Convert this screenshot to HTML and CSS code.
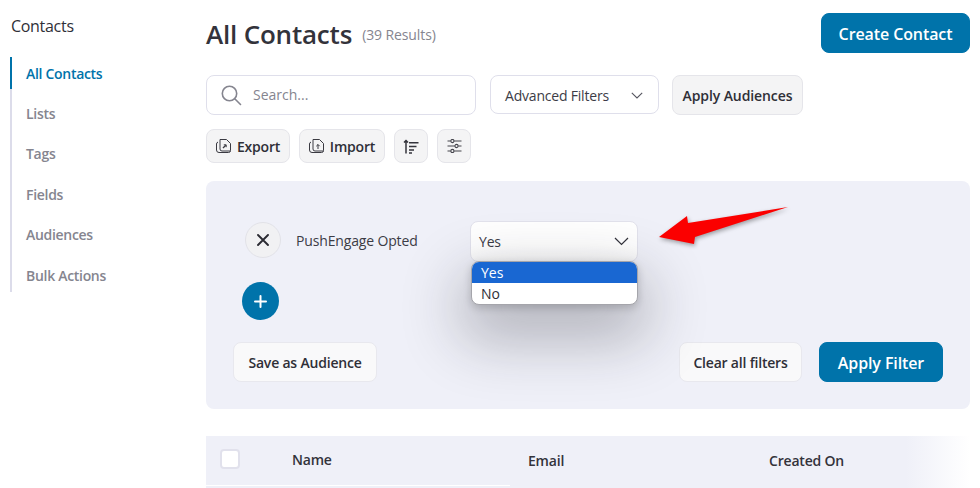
FILE: index.html
```html
<!DOCTYPE html>
<html lang="en">
<head>
    <meta charset="UTF-8">
    <title>Contacts</title>
    <link rel="stylesheet" href="styles.css">
</head>
<body>
<div class="page">
    <aside class="sidebar">
        <div class="sidebarTitle">Contacts</div>
        <nav class="sideNav">
            <a class="sideLink active">All Contacts</a>
            <a class="sideLink">Lists</a>
            <a class="sideLink">Tags</a>
            <a class="sideLink">Fields</a>
            <a class="sideLink">Audiences</a>
            <a class="sideLink">Bulk Actions</a>
        </nav>
    </aside>

    <main class="main">
        <header class="topRow">
            <div class="titleWrap">
                <h1 class="pageTitle">All Contacts</h1>
                <span class="resultCount">(39 Results)</span>
            </div>
            <button class="btn primary createBtn">Create Contact</button>
        </header>

        <div class="filterRow">
            <div class="searchBox">
                <svg class="searchIcon" width="22" height="22" viewBox="0 0 22 22" fill="none" stroke="#85858f" stroke-width="1.6" stroke-linecap="round">
                    <circle cx="9.5" cy="9.5" r="7.2"/>
                    <path d="M15 15l5.5 5.5"/>
                </svg>
                <span>Search...</span>
            </div>
            <div class="advFilters">
                <span>Advanced Filters</span>
                <svg width="12" height="7" viewBox="0 0 12 7" fill="none" stroke="#55555f" stroke-width="1.1"><path d="M.8.8L6 6l5.2-5.200"/></svg>
            </div>
            <button class="btn grey applyAud">Apply Audiences</button>
        </div>

        <div class="toolRow">
            <button class="btn grey toolBtn exportBtn">
                <svg width="15" height="15" viewBox="0 0 15 15" fill="none" stroke="#3a3a42" stroke-width="1">
                    <path d="M4 .5h6.500l4 4v7a2 2 0 0 1-2 2h-9.500a2.500 2.500 0 0 1-2.500-2.500v-6a2 2 0 0 1 1.500-1.900"/>
                    <path d="M4 .5v9.500a2 2 0 0 0 2 2h8.500"/>
                    <path d="M7 9l2.800-2.800" stroke-width="1.300"/>
                    <path d="M7.800 5.800h2.400v2.400"/>
                </svg>
                Export
            </button>
            <button class="btn grey toolBtn importBtn">
                <svg width="15" height="15" viewBox="0 0 15 15" fill="none" stroke="#3a3a42" stroke-width="1">
                    <path d="M4 .5h6.500l4 4v7a2 2 0 0 1-2 2h-9.500a2.500 2.500 0 0 1-2.500-2.500v-6a2 2 0 0 1 1.500-1.900"/>
                    <path d="M4 .5v9.500a2 2 0 0 0 2 2h8.500"/>
                    <path d="M9 10V5.500M7.300 7.200L9 5.500l1.700 1.700"/>
                </svg>
                Import
            </button>
            <button class="btn grey iconBtn">
                <svg width="16" height="15" viewBox="0 0 16 15" fill="none" stroke="#33333b" stroke-width="1.500">
                    <path d="M3 14.500V1.500M1 3.500l2-2 2 2M6 3.800h9.500M6 7.500h7.500M6 11h5M6 14h3"/>
                </svg>
            </button>
            <button class="btn grey iconBtn">
                <svg width="15" height="14" viewBox="0 0 15 14" fill="none" stroke="#44444c" stroke-width="1.100">
                    <path d="M.5 2h3.200M7.200 2h7.300M.5 7h7.200M11.200 7h3.300M.5 12h3.200M7.200 12h7.300"/>
                    <circle cx="5.400" cy="2" r="1.600"/>
                    <circle cx="9.500" cy="7" r="1.600"/>
                    <circle cx="5.400" cy="12" r="1.600"/>
                </svg>
            </button>
        </div>

        <section class="filterPanel">
            <div class="ruleRow">
                <button class="removeBtn">
                    <svg width="12" height="12" viewBox="0 0 12 12" stroke="#2b2b33" stroke-width="1.900" stroke-linecap="round"><path d="M1 1l10 10M11 1L1 11"/></svg>
                </button>
                <span class="ruleLabel">PushEngage Opted</span>
                <div class="selectWrap">
                    <div class="selectBox">
                        <span>Yes</span>
                        <svg width="15" height="9" viewBox="0 0 15 9" fill="none" stroke="#33333b" stroke-width="1.200"><path d="M1 1l6.500 6.500L14 1"/></svg>
                    </div>
                    <ul class="selectMenu">
                        <li class="selected">Yes</li>
                        <li>No</li>
                    </ul>
                </div>
            </div>
            <button class="addBtn">
                <svg width="13" height="13" viewBox="0 0 13 13" stroke="#fff" stroke-width="2" stroke-linecap="round"><path d="M6.500 1v11M1 6.500h11"/></svg>
            </button>
            <div class="panelActions">
                <button class="btn light">Save as Audience</button>
                <div class="panelRight">
                    <button class="btn light">Clear all filters</button>
                    <button class="btn primary applyFilter">Apply Filter</button>
                </div>
            </div>
            <svg class="arrow" width="136" height="44" viewBox="0 0 136 44">
                <polygon points="1,31 29,10 30,17 130,1 37,31 36,38" fill="#fb0000"/>
            </svg>
        </section>

        <div class="tableHead">
            <span class="checkBox"></span>
            <span class="colName">Name</span>
            <span class="colEmail">Email</span>
            <span class="colCreated">Created On</span>
            <span class="headLine"></span>
        </div>
    </main>
</div>
</body>
</html>
```

FILE: styles.css
```css
html, body {
    margin: 0;
    padding: 0;
    height: 488px;
    overflow: hidden;
    background-color: #fff;
    color: #2f2f37;
    font-family: "Open Sans", "Noto Sans", sans-serif;
}

.page {
    display: flex;
    height: 488px;
}

.sidebar {
    width: 206px;
    flex: none;
    padding: 16px 0 0 10px;
    box-sizing: border-box;
}

.sidebarTitle {
    font-size: 16px;
    line-height: 20px;
    font-weight: 500;
    padding-left: 1px;
    letter-spacing: -0.3px;
    color: #2f2f37;
}

.sideNav {
    margin-top: 21px;
    display: flex;
    flex-direction: column;
    width: 180px;
    border-left: 2px solid #dcdcea;
}

.sideLink {
    height: 40.600px;
    line-height: 32px;
    padding-left: 14px;
    margin-left: -2px;
    border-left: 2px solid transparent;
    font-size: 14px;
    font-weight: 600;
    letter-spacing: -0.3px;
    color: #85858f;
}

.sideLink:last-child {
    height: 32px;
    line-height: 32px;
}

.sideLink.active {
    height: 32px;
    line-height: 33px;
    margin-bottom: 8.500px;
    color: #0073aa;
    border-left-color: #0073aa;
}

.main {
    width: 764px;
    flex: none;
    position: relative;
}

.btn {
    font-family: inherit;
    font-size: 14px;
    font-weight: 600;
    letter-spacing: -0.2px;
    border-radius: 8px;
    padding: 0;
    cursor: pointer;
    color: #2f2f37;
}

.btn.primary {
    background-color: #0073aa;
    border: 1px solid #0073aa;
    color: #fff;
    font-size: 16px;
    letter-spacing: -0.1px;
    padding-top: 1px;
}

.btn.grey {
    background-color: #f4f4f5;
    border: 1px solid #e5e5ea;
}

.btn.light {
    background-color: #f9f9fa;
    border: 1px solid #e8e8ee;
    height: 40px;
}

.topRow {
    display: flex;
    justify-content: space-between;
    padding-top: 13px;
    height: 62px;
    box-sizing: border-box;
}

.titleWrap {
    display: flex;
    align-items: baseline;
    gap: 10px;
    line-height: 42px;
}

.pageTitle {
    margin: 0;
    font-size: 26px;
    font-weight: 600;
    letter-spacing: -0.2px;
    color: #33333b;
}

.resultCount {
    font-size: 14px;
    letter-spacing: -0.1px;
    color: #85858f;
    position: relative;
    top: -4px;
}

.createBtn {
    width: 149px;
    height: 40px;
}

.filterRow {
    display: flex;
    margin-top: 13px;
    align-items: flex-start;
}

.searchBox {
    width: 270px;
    height: 40px;
    box-sizing: border-box;
    border: 1px solid #dfdfeb;
    border-radius: 8px;
    display: flex;
    align-items: center;
    gap: 11px;
    padding-left: 13px;
    font-size: 14px;
    color: #85858f;
    margin-right: 14px;
}

.searchBox span {
    position: relative;
    top: -1px;
}

.advFilters {
    width: 169px;
    height: 39px;
    box-sizing: border-box;
    border: 1px solid #dfdfeb;
    border-radius: 8px;
    display: flex;
    align-items: center;
    justify-content: space-between;
    padding: 2px 15px 0 14px;
    font-size: 14px;
    letter-spacing: -0.2px;
    color: #3c3c46;
    margin-right: 13px;
}

.applyAud {
    width: 131px;
    height: 40px;
    letter-spacing: -0.1px;
}

.toolRow {
    display: flex;
    gap: 9px;
    margin-top: 14px;
}

.toolBtn {
    height: 34px;
    display: flex;
    align-items: center;
    justify-content: center;
    gap: 6px;
}

.exportBtn {
    width: 84px;
}

.importBtn {
    width: 86px;
}

.iconBtn {
    width: 34px;
    height: 34px;
    display: flex;
    align-items: center;
    justify-content: center;
}

.filterPanel {
    position: relative;
    margin-top: 18px;
    height: 228px;
    box-sizing: border-box;
    background-color: #eff0f8;
    border-radius: 8px;
    padding: 41px 27px 0 27px;
}

.ruleRow {
    display: flex;
    align-items: flex-start;
    padding-left: 12px;
}

.removeBtn {
    width: 36px;
    height: 36px;
    padding: 0;
    border-radius: 50%;
    border: 1px solid #e2e2e8;
    background-color: #f1f1f3;
    display: flex;
    align-items: center;
    justify-content: center;
    flex: none;
}

.ruleLabel {
    width: 174px;
    margin-left: 15px;
    line-height: 38px;
    font-size: 14px;
    letter-spacing: -0.15px;
    color: #3c3c46;
}

.selectWrap {
    position: relative;
    width: 168px;
    margin-top: -1px;
}

.selectBox {
    height: 41px;
    box-sizing: border-box;
    background: linear-gradient(#fff 60%, #f8f8f9);
    border: 1px solid #e2e2ec;
    border-radius: 8px;
    display: flex;
    align-items: center;
    justify-content: space-between;
    padding: 0 8px 0 8px;
    font-size: 14px;
    letter-spacing: -0.2px;
    color: #3c3c46;
}

.selectMenu {
    position: absolute;
    top: 40px;
    left: 1px;
    width: 167px;
    box-sizing: border-box;
    margin: 0;
    padding: 0;
    list-style: none;
    background-color: #fff;
    border: 1px solid #a5a5ab;
    border-radius: 8px;
    overflow: hidden;
    font-size: 14px;
    line-height: 21px;
    color: #2f2f37;
    box-shadow: 0 24px 60px 10px rgba(30, 30, 40, 0.3), 0 3px 8px rgba(0, 0, 0, 0.18);
}

.selectMenu li {
    padding-left: 9px;
}

.selectMenu .selected {
    background-color: #1967d2;
    color: #fff;
}

.addBtn {
    position: relative;
    display: flex;
    align-items: center;
    justify-content: center;
    width: 37px;
    height: 38px;
    margin: 20px 0 0 9px;
    padding: 0;
    border: none;
    border-radius: 50%;
    background-color: #0073aa;
}

.panelActions {
    display: flex;
    justify-content: space-between;
    margin-top: 22px;
}

.panelActions > .btn {
    width: 144px;
}

.panelRight {
    display: flex;
    gap: 17px;
}

.panelRight .light {
    width: 123px;
}

.applyFilter {
    width: 124px;
    height: 40px;
}

.arrow {
    position: absolute;
    left: 452px;
    top: 25px;
    filter: drop-shadow(1px 2px 2px rgba(0, 0, 0, 0.35));
}

.tableHead {
    position: relative;
    margin-top: 27px;
    height: 52px;
    background: linear-gradient(to right, #eff0f8 700px, #fff 764px);
    font-size: 14px;
    font-weight: 600;
    letter-spacing: -0.2px;
    color: #33333b;
}

.tableHead span {
    position: absolute;
}

.checkBox {
    left: 14px;
    top: 13px;
    width: 20px;
    height: 20px;
    box-sizing: border-box;
    background-color: #fff;
    border: 2px solid #e1e1ec;
    border-radius: 4px;
}

.colName {
    left: 86px;
    top: 14px;
}

.colEmail {
    left: 322px;
    top: 15px;
}

.colCreated {
    left: 563px;
    top: 15px;
}

.headLine {
    left: 0;
    top: 49px;
    width: 304px;
    height: 1px;
    background-color: #fff;
}
```
